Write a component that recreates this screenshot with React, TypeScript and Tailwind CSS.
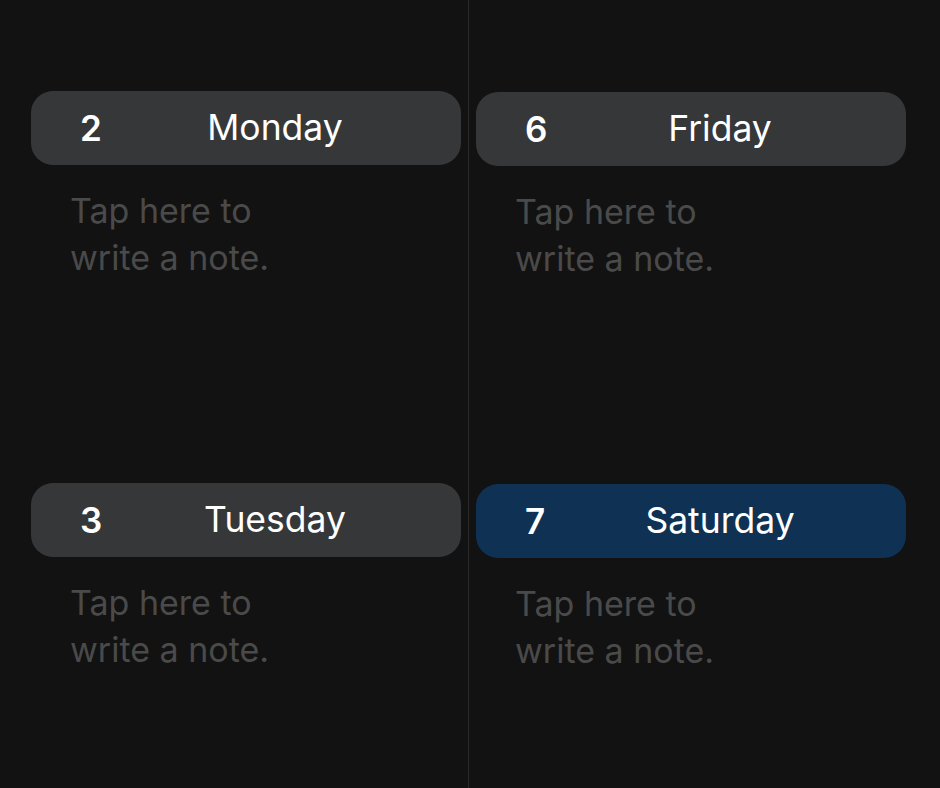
const days = [
  [
    { n: 2, name: 'Monday' },
    { n: 3, name: 'Tuesday' },
  ],
  [
    { n: 6, name: 'Friday' },
    { n: 7, name: 'Saturday', today: true },
  ],
];

function DayCell({ n, name, today }: { n: number; name: string; today?: boolean }) {
  return (
    <div className="h-[392px]">
      <div
        className={`h-[74px] rounded-[22px] flex items-center pl-[49px] pr-[15px] text-white ${
          today ? 'bg-[#0f3154]' : 'bg-[#363739]'
        }`}
      >
        <span className="w-[24px] text-[35px] font-semibold leading-none">{n}</span>
        <span className="flex-1 text-center text-[35.5px] leading-none">{name}</span>
      </div>
      <div className="pl-[39px] pt-[22px] text-[34px] leading-[47px] text-[#4a4a4a]">
        Tap here to
        <br />
        write a note.
      </div>
    </div>
  );
}

export default function App() {
  return (
    <div
      className="w-[940px] h-[788px] bg-[#121212] flex overflow-hidden"
      style={{ fontFamily: 'Inter, "Noto Sans", sans-serif' }}
    >
      <div className="w-[469px] pl-[31px] pr-[7px] pt-[91px] border-r border-[#2a2a2a]">
        {days[0].map((d) => (
          <DayCell key={d.n} {...d} />
        ))}
      </div>
      <div className="flex-1 pl-[7px] pr-[34px] pt-[92px]">
        {days[1].map((d) => (
          <DayCell key={d.n} {...d} />
        ))}
      </div>
    </div>
  );
}
